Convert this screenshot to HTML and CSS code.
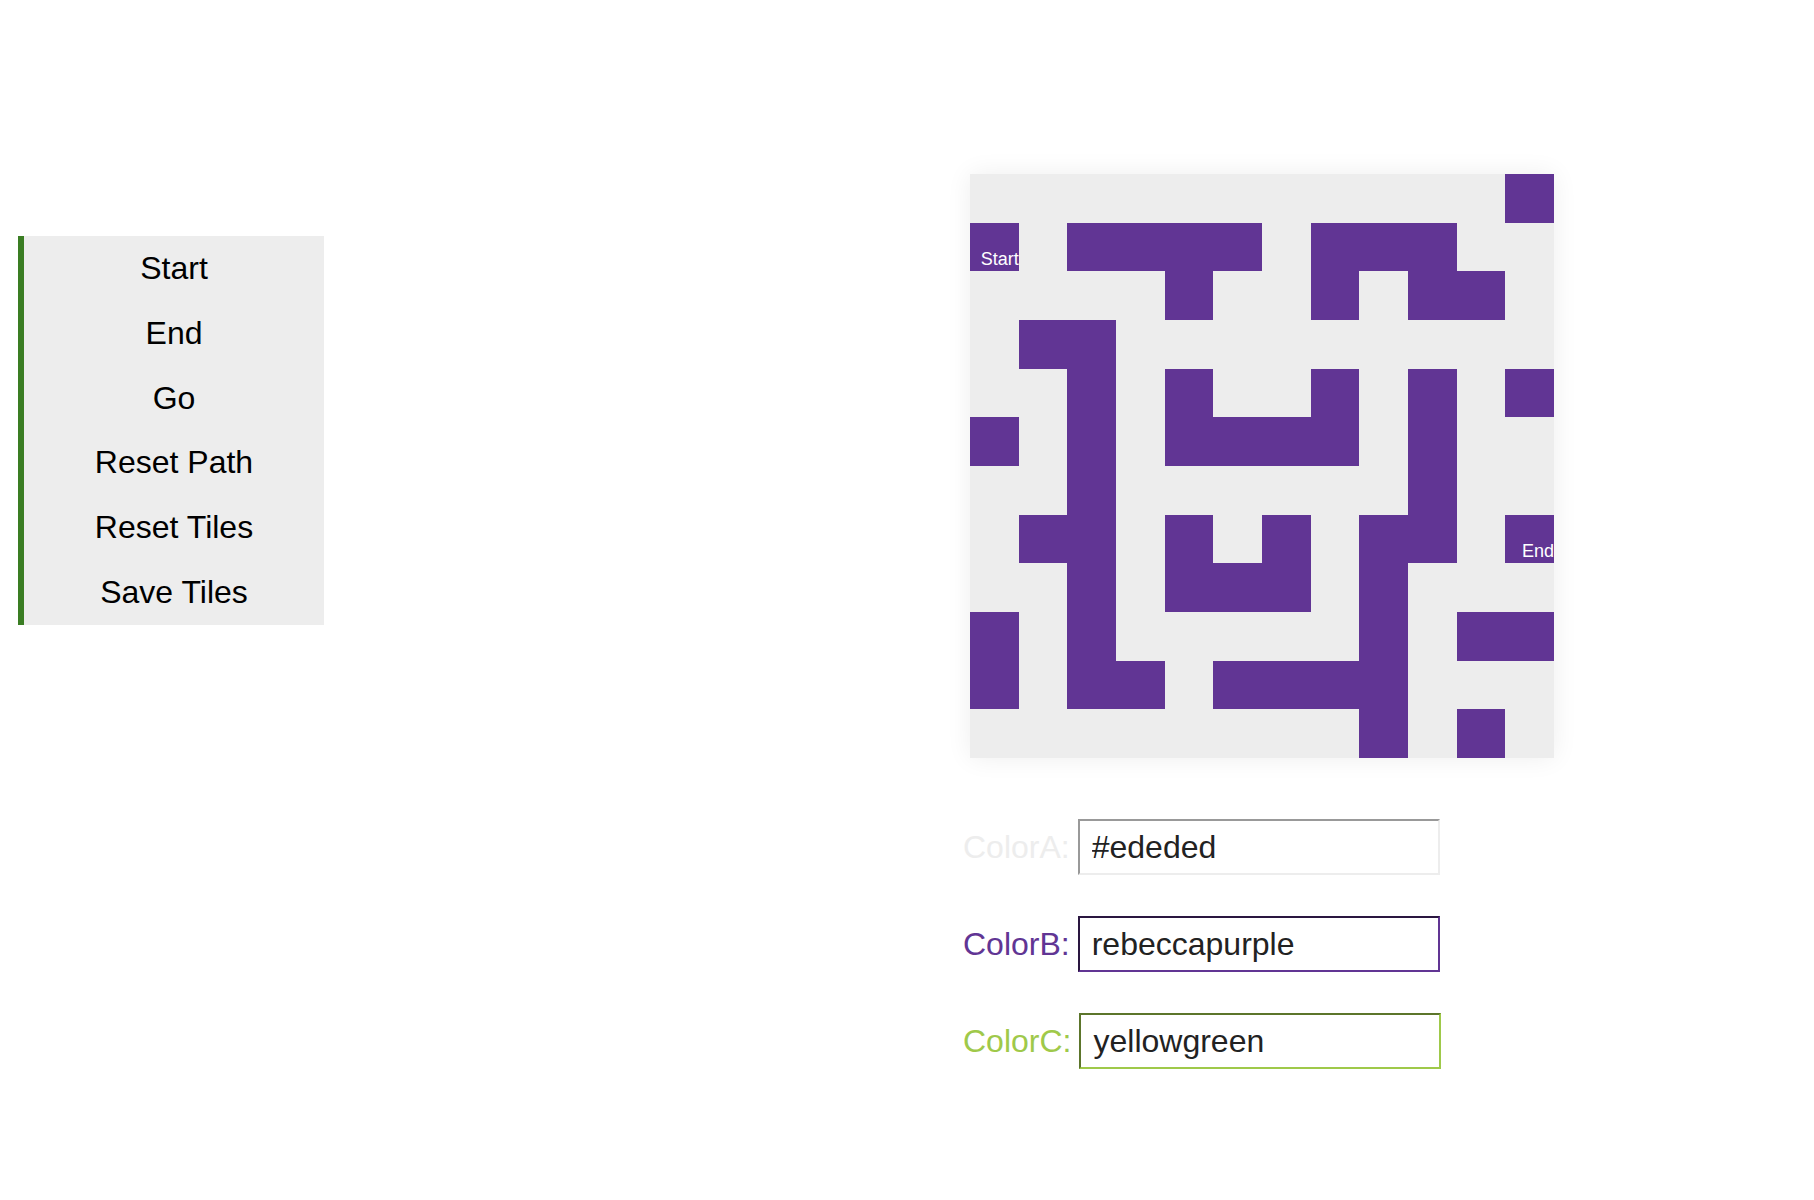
FILE: index.html
```html
<!DOCTYPE html>
<html lang="en">
<head>
<meta charset="utf-8">
<title>Path Finder</title>
<link rel="stylesheet" href="styles.css">
</head>
<body>
<div class="app">
  <nav class="menu">
    <button class="menu-item">Start</button>
    <button class="menu-item">End</button>
    <button class="menu-item">Go</button>
    <button class="menu-item">Reset Path</button>
    <button class="menu-item">Reset Tiles</button>
    <button class="menu-item">Save Tiles</button>
  </nav>
  <main class="board">
    <div class="grid">
      <div class="c"></div><div class="c"></div><div class="c"></div><div class="c"></div><div class="c"></div><div class="c"></div><div class="c"></div><div class="c"></div><div class="c"></div><div class="c"></div><div class="c"></div><div class="c w"></div>
      <div class="c w tag">Start</div><div class="c"></div><div class="c w"></div><div class="c w"></div><div class="c w"></div><div class="c w"></div><div class="c"></div><div class="c w"></div><div class="c w"></div><div class="c w"></div><div class="c"></div><div class="c"></div>
      <div class="c"></div><div class="c"></div><div class="c"></div><div class="c"></div><div class="c w"></div><div class="c"></div><div class="c"></div><div class="c w"></div><div class="c"></div><div class="c w"></div><div class="c w"></div><div class="c"></div>
      <div class="c"></div><div class="c w"></div><div class="c w"></div><div class="c"></div><div class="c"></div><div class="c"></div><div class="c"></div><div class="c"></div><div class="c"></div><div class="c"></div><div class="c"></div><div class="c"></div>
      <div class="c"></div><div class="c"></div><div class="c w"></div><div class="c"></div><div class="c w"></div><div class="c"></div><div class="c"></div><div class="c w"></div><div class="c"></div><div class="c w"></div><div class="c"></div><div class="c w"></div>
      <div class="c w"></div><div class="c"></div><div class="c w"></div><div class="c"></div><div class="c w"></div><div class="c w"></div><div class="c w"></div><div class="c w"></div><div class="c"></div><div class="c w"></div><div class="c"></div><div class="c"></div>
      <div class="c"></div><div class="c"></div><div class="c w"></div><div class="c"></div><div class="c"></div><div class="c"></div><div class="c"></div><div class="c"></div><div class="c"></div><div class="c w"></div><div class="c"></div><div class="c"></div>
      <div class="c"></div><div class="c w"></div><div class="c w"></div><div class="c"></div><div class="c w"></div><div class="c"></div><div class="c w"></div><div class="c"></div><div class="c w"></div><div class="c w"></div><div class="c"></div><div class="c w tag">End</div>
      <div class="c"></div><div class="c"></div><div class="c w"></div><div class="c"></div><div class="c w"></div><div class="c w"></div><div class="c w"></div><div class="c"></div><div class="c w"></div><div class="c"></div><div class="c"></div><div class="c"></div>
      <div class="c w"></div><div class="c"></div><div class="c w"></div><div class="c"></div><div class="c"></div><div class="c"></div><div class="c"></div><div class="c"></div><div class="c w"></div><div class="c"></div><div class="c w"></div><div class="c w"></div>
      <div class="c w"></div><div class="c"></div><div class="c w"></div><div class="c w"></div><div class="c"></div><div class="c w"></div><div class="c w"></div><div class="c w"></div><div class="c w"></div><div class="c"></div><div class="c"></div><div class="c"></div>
      <div class="c"></div><div class="c"></div><div class="c"></div><div class="c"></div><div class="c"></div><div class="c"></div><div class="c"></div><div class="c"></div><div class="c w"></div><div class="c"></div><div class="c w"></div><div class="c"></div>
    </div>
    <form class="colors">
      <label class="field field-a">ColorA: <input class="field-input" type="text" value="#ededed"></label>
      <label class="field field-b">ColorB: <input class="field-input" type="text" value="rebeccapurple"></label>
      <label class="field field-c">ColorC: <input class="field-input" type="text" value="yellowgreen"></label>
    </form>
  </main>
</div>
</body>
</html>
```

FILE: styles.css
```css
:root {
  --color-a: #ededed;
  --color-b: #613594;
  --color-c: #9fc94a;
  --accent: #3a7d23;
}

* {
  box-sizing: border-box;
}

body {
  margin: 0;
  background: #ffffff;
  font-family: "Liberation Sans", Arial, Helvetica, sans-serif;
  color: #000;
}

.app {
  display: flex;
  align-items: flex-start;
}

.menu {
  display: flex;
  flex-direction: column;
  width: 306px;
  margin: 236px 0 0 18px;
  background: #ededed;
  border-left: 6px solid var(--accent);
}

.menu-item {
  display: block;
  width: 100%;
  padding: 14px 0;
  border: 0;
  background: transparent;
  font-family: inherit;
  font-size: 32px;
  line-height: 36.8px;
  color: #000;
  text-align: center;
  cursor: pointer;
}

.board {
  margin: 174px 0 0 639px;
  display: flex;
  flex-direction: column;
}

.grid {
  margin-left: 7px;
  width: 584px;
  height: 584px;
  display: grid;
  grid-template-columns: repeat(12, 1fr);
  grid-template-rows: repeat(12, 1fr);
  background: var(--color-a);
  box-shadow: 0 0 24px rgba(0, 0, 0, 0.07);
}

.c {
  background: var(--color-a);
  overflow: hidden;
}

.c.w {
  background: var(--color-b);
}

.tag {
  display: flex;
  align-items: flex-end;
  justify-content: flex-end;
  padding-bottom: 2px;
  font-size: 18px;
  line-height: 20px;
  color: #ffffff;
  white-space: nowrap;
}

.colors {
  margin: 61px 0 0 0;
  display: flex;
  flex-direction: column;
  gap: 41px;
}

.field {
  display: flex;
  align-items: center;
  gap: 8px;
  font-size: 32px;
  white-space: nowrap;
}

.field-a { color: var(--color-a); }
.field-b { color: var(--color-b); }
.field-c { color: var(--color-c); }

.field-input {
  width: 362px;
  height: 56px;
  padding: 0 12px;
  font-family: inherit;
  font-size: 32px;
  color: #222;
  background: #fff;
  border: 2px inset currentColor;
  outline: none;
}

.field-a .field-input { border-color: var(--color-a); }
.field-b .field-input { border-color: var(--color-b); }
.field-c .field-input { border-color: var(--color-c); }
```
